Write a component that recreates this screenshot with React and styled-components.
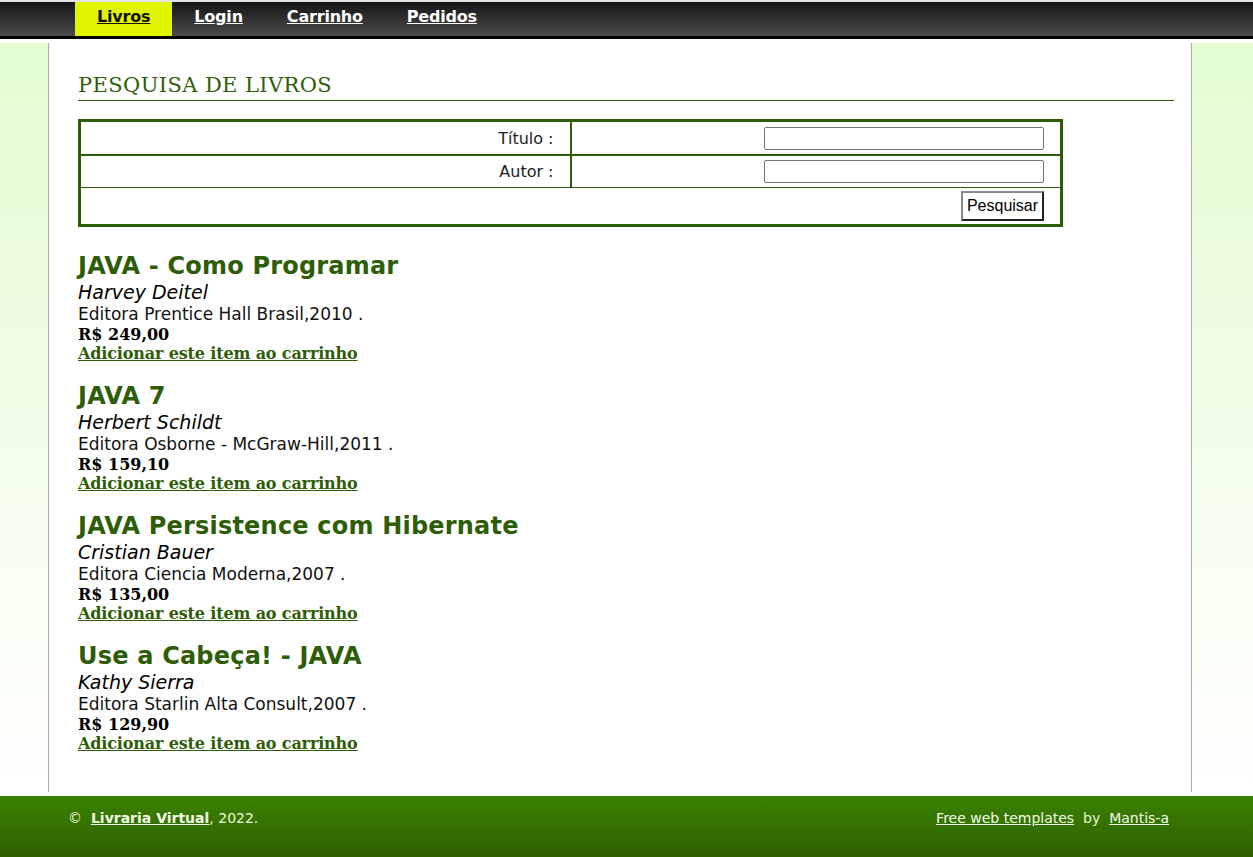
import React from 'react';
import styled, { createGlobalStyle } from 'styled-components';

const GlobalStyle = createGlobalStyle`
  html, body {
    margin: 0;
    padding: 0;
    background: #ffffff;
  }
  body {
    font-family: Verdana, 'DejaVu Sans', sans-serif;
    color: #111;
  }
`;

const green = '#2e5d08';

const Header = styled.header`
  height: 34px;
  border-top: 2px solid #e4e4e4;
  border-bottom: 3px solid #000;
  background: linear-gradient(to bottom, #151515, #4b4b4b);
`;

const Menu = styled.ul`
  list-style: none;
  margin: 0;
  padding: 0 0 0 75px;
  display: flex;
  height: 100%;
`;

const MenuItem = styled.li`
  display: flex;
  align-items: center;
  padding: 0 22px 5px;
  background: ${(p) => (p.$active ? '#e1f500' : 'transparent')};

  a {
    font-family: Verdana, 'DejaVu Sans', sans-serif;
    font-size: 16px;
    font-weight: bold;
    color: ${(p) => (p.$active ? '#111' : '#fff')};
    text-decoration: underline;
    letter-spacing: -0.2px;
  }
`;

const Main = styled.main`
  margin-top: 4px;
  padding-bottom: 4px;
  background: linear-gradient(to bottom, #e3fcd0 0%, #f1fde8 50%, #ffffff 100%);
`;

const Panel = styled.div`
  margin-left: 48px;
  width: 1144px;
  min-height: 749px;
  box-sizing: border-box;
  background: #fff;
  border-left: 1px solid #a9a9a9;
  border-right: 1px solid #a9a9a9;
  padding: 30px 17px 0 29px;
`;

const Heading = styled.h2`
  margin: 0 0 18px;
  padding-bottom: 3px;
  border-bottom: 1px solid ${green};
  font-family: Georgia, 'DejaVu Serif', serif;
  font-weight: normal;
  font-size: 21px;
  color: ${green};
  letter-spacing: 0.4px;
`;

const SearchTable = styled.table`
  width: 985px;
  border-collapse: collapse;
  border: 3px solid ${green};
  margin-bottom: 25px;
`;

const Cell = styled.td`
  border: 1px solid ${green};
  border-bottom-width: ${(p) => p.$thick ? '2px' : '1px'};
  border-right-width: ${(p) => p.$divide ? '2px' : '1px'};
  text-align: right;
  padding: 0 16px;
  height: ${(p) => p.$h}px;
  font-size: 16px;
  color: #222;
  width: 50%;
`;

const TextInput = styled.input`
  width: 280px;
  height: 23px;
  box-sizing: border-box;
  border: 1px solid #767676;
  border-radius: 2px;
  vertical-align: middle;
`;

const SearchButton = styled.button`
  font-family: Arial, 'Liberation Sans', sans-serif;
  font-size: 16px;
  height: 30px;
  width: 83px;
  padding: 0;
  background: #fff;
  color: #000;
  border: 2px solid;
  border-color: #8a8a8a #222 #222 #8a8a8a;
  vertical-align: middle;
`;

const Book = styled.div`
  margin-bottom: 19px;
`;

const BookTitle = styled.h3`
  margin: 0;
  font-family: Verdana, 'DejaVu Sans', sans-serif;
  font-size: 24px;
  line-height: 29px;
  font-weight: bold;
  letter-spacing: 0.2px;
  color: ${green};
`;

const Author = styled.div`
  font-style: italic;
  font-size: 19px;
  line-height: 23px;
  color: #000;
`;

const Publisher = styled.div`
  font-size: 17px;
  line-height: 21px;
  color: #111;
`;

const Price = styled.div`
  font-family: Georgia, 'DejaVu Serif', serif;
  font-weight: bold;
  font-size: 16px;
  line-height: 19px;
  color: #000;
`;

const AddLink = styled.a`
  display: block;
  font-family: Georgia, 'DejaVu Serif', serif;
  font-weight: bold;
  font-size: 16px;
  line-height: 19px;
  letter-spacing: -0.15px;
  color: ${green};
  text-decoration: underline;
`;

const Footer = styled.footer`
  height: 61px;
  background: linear-gradient(to bottom, #3b8200, #2d6000);
  color: #e8f7d8;
  font-size: 14px;
  display: flex;
  justify-content: space-between;
  align-items: flex-start;
  padding: 14px 84px 0 68px;
  box-sizing: border-box;

  a {
    color: #f2fbe8;
    text-decoration: underline;
  }
`;

const Strong = styled.a`
  font-weight: bold;
`;

const books = [
  { title: 'JAVA - Como Programar', author: 'Harvey Deitel', pub: 'Editora Prentice Hall Brasil,2010 .', price: 'R$ 249,00' },
  { title: 'JAVA 7', author: 'Herbert Schildt', pub: 'Editora Osborne - McGraw-Hill,2011 .', price: 'R$ 159,10' },
  { title: 'JAVA Persistence com Hibernate', author: 'Cristian Bauer', pub: 'Editora Ciencia Moderna,2007 .', price: 'R$ 135,00' },
  { title: 'Use a Cabeça! - JAVA', author: 'Kathy Sierra', pub: 'Editora Starlin Alta Consult,2007 .', price: 'R$ 129,90' },
];

export default function App() {
  return (
    <>
      <GlobalStyle />
      <Header>
        <Menu>
          <MenuItem $active><a href="#">Livros</a></MenuItem>
          <MenuItem><a href="#">Login</a></MenuItem>
          <MenuItem><a href="#">Carrinho</a></MenuItem>
          <MenuItem><a href="#">Pedidos</a></MenuItem>
        </Menu>
      </Header>
      <Main>
        <Panel>
          <Heading>PESQUISA DE LIVROS</Heading>
          <SearchTable>
            <tbody>
              <tr>
                <Cell $h={32} $thick $divide>Título :</Cell>
                <Cell $h={32} $thick><TextInput /></Cell>
              </tr>
              <tr>
                <Cell $h={31} $divide>Autor :</Cell>
                <Cell $h={31}><TextInput /></Cell>
              </tr>
              <tr>
                <Cell $h={36} colSpan={2}><SearchButton>Pesquisar</SearchButton></Cell>
              </tr>
            </tbody>
          </SearchTable>
          {books.map((b) => (
            <Book key={b.title}>
              <BookTitle>{b.title}</BookTitle>
              <Author>{b.author}</Author>
              <Publisher>{b.pub}</Publisher>
              <Price>{b.price}</Price>
              <AddLink href="#">Adicionar este item ao carrinho</AddLink>
            </Book>
          ))}
        </Panel>
      </Main>
      <Footer>
        <span>©&nbsp; <Strong href="#">Livraria Virtual</Strong>, 2022.</span>
        <span><a href="#">Free web templates</a>&nbsp; by &nbsp;<a href="#">Mantis-a</a></span>
      </Footer>
    </>
  );
}
